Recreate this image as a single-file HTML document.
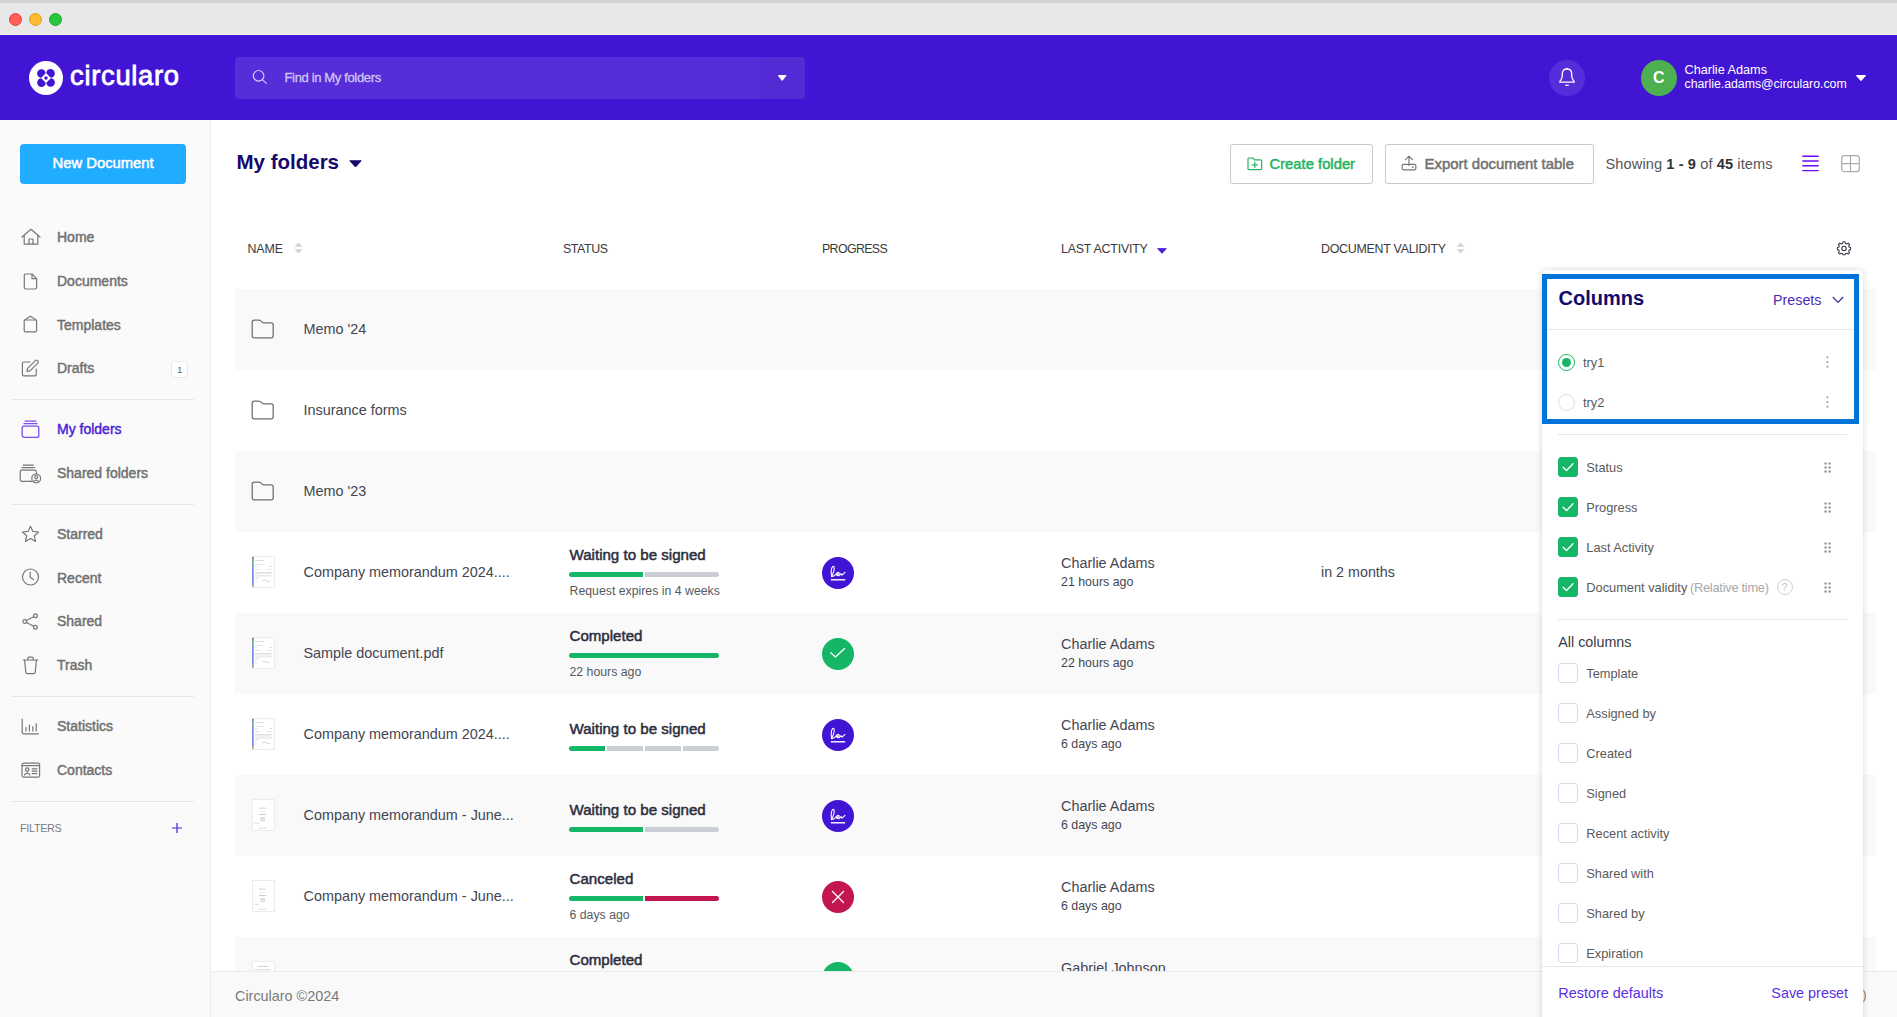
<!DOCTYPE html>
<html><head><meta charset="utf-8"><title>Circularo - My folders</title>
<style>
*{box-sizing:border-box;margin:0;padding:0}
html,body{width:1897px;height:1017px;overflow:hidden;background:#fff;font-family:"Liberation Sans",sans-serif;}
.abs{position:absolute}
.t{position:absolute;white-space:nowrap;line-height:1}
svg{overflow:visible}
</style></head><body>
<div class="abs" style="left:0px;top:0px;width:1897px;height:35px;background:#e8e8e8;"></div>
<div class="abs" style="left:0px;top:0px;width:1897px;height:3px;background:#d2d2d2;"></div>
<div class="abs" style="left:0px;top:34px;width:1897px;height:1px;background:#f4f3ec;"></div>
<div class="abs" style="left:9px;top:13px;width:13px;height:13px;border-radius:50%;background:#fe5f57;border:0.5px solid #e0443e"></div>
<div class="abs" style="left:29px;top:13px;width:13px;height:13px;border-radius:50%;background:#febc2e;border:0.5px solid #dfa123"></div>
<div class="abs" style="left:49px;top:13px;width:13px;height:13px;border-radius:50%;background:#28c840;border:0.5px solid #1aab29"></div>
<div class="abs" style="left:0px;top:35px;width:1897px;height:85px;background:#4214d4;"></div>
<svg class="abs" style="left:28.5px;top:61px;" width="34" height="34" viewBox="0 0 34 34"><circle cx="17" cy="17" r="17" fill="#fff"/>
<g fill="#4214d4"><path d="M16.7 16.7 V12.5 A4.3 4.3 0 0 0 12.4 8.2 A4.3 4.3 0 0 0 8.1 12.5 A4.3 4.3 0 0 0 12.4 16.8 Z"/><g transform="rotate(90 17 17)"><path d="M16.7 16.7 V12.5 A4.3 4.3 0 0 0 12.4 8.2 A4.3 4.3 0 0 0 8.1 12.5 A4.3 4.3 0 0 0 12.4 16.8 Z"/></g><g transform="rotate(180 17 17)"><path d="M16.7 16.7 V12.5 A4.3 4.3 0 0 0 12.4 8.2 A4.3 4.3 0 0 0 8.1 12.5 A4.3 4.3 0 0 0 12.4 16.8 Z"/></g><g transform="rotate(270 17 17)"><path d="M16.7 16.7 V12.5 A4.3 4.3 0 0 0 12.4 8.2 A4.3 4.3 0 0 0 8.1 12.5 A4.3 4.3 0 0 0 12.4 16.8 Z"/></g></g>
<rect x="13.5" y="13.5" width="7" height="7" fill="#fff" transform="rotate(45 17 17)"/>
<circle cx="17" cy="17" r="1.7" fill="#4214d4"/></svg>
<div class="t " style="left:70px;top:62.01px;font-size:27.4px;color:#fff;letter-spacing:0.7px;-webkit-text-stroke:0.8px #fff;">circularo</div>
<div class="abs" style="left:235px;top:57px;width:570px;height:42px;background:#572dd9;border-radius:4px;"></div>
<div class="abs" style="left:759px;top:57px;width:46px;height:42px;background:#532ad3;border-radius:0 4px 4px 0;"></div>
<svg class="abs" style="left:252px;top:69px;" width="16" height="16" viewBox="0 0 16 16"><circle cx="6.6" cy="6.8" r="5.3" fill="none" stroke="#d4cbf5" stroke-width="1.2"/><line x1="10.4" y1="10.6" x2="14.6" y2="14.6" stroke="#d4cbf5" stroke-width="1.2"/></svg>
<div class="t " style="left:284.5px;top:71.00px;font-size:13px;color:#cfc6f4;letter-spacing:-0.35px;-webkit-text-stroke:0.3px #cfc6f4;">Find in My folders</div>
<svg class="abs" style="left:778px;top:75px;" width="9" height="6" viewBox="0 0 9 6"><path d="M0.6 0.6 L7.8 0.6 L4.2 5.2 Z" fill="#fff" stroke="#fff" stroke-width="1.1" stroke-linejoin="round"/></svg>
<div class="abs" style="left:1549px;top:59.5px;width:36px;height:36px;border-radius:50%;background:#552ed9"></div>
<svg class="abs" style="left:1557.5px;top:67px;" width="18" height="20" viewBox="0 0 18 20"><path d="M1.8 15.2 Q1.8 14 3 12.8 Q4.2 11.6 4.3 8.6 L4.3 6.8 Q4.3 2 9 2 Q13.7 2 13.7 6.8 L13.7 8.6 Q13.8 11.6 15 12.8 Q16.2 14 16.2 15.2 Z" fill="none" stroke="#fff" stroke-width="1.3" stroke-linejoin="round"/><path d="M7.4 17.8 Q9 19.2 10.6 17.8" fill="none" stroke="#fff" stroke-width="1.2"/><circle cx="9" cy="1.5" r="0.8" fill="#fff"/></svg>
<div class="abs" style="left:1641px;top:60px;width:36px;height:36px;border-radius:50%;background:#4caf50"></div>
<div class="t " style="left:1653px;top:70.46px;font-size:16px;color:#fff;font-weight:700;">C</div>
<div class="t " style="left:1684.5px;top:64.25px;font-size:12.7px;color:#fff;">Charlie Adams</div>
<div class="t " style="left:1684.5px;top:78.09px;font-size:12.3px;color:#fff;">charlie.adams@circularo.com</div>
<svg class="abs" style="left:1856px;top:75px;" width="10" height="6" viewBox="0 0 10 6"><path d="M0.7 0.7 L9.3 0.7 L5 5.3 Z" fill="#fff" stroke="#fff" stroke-width="1.2" stroke-linejoin="round"/></svg>
<div class="abs" style="left:0px;top:120px;width:211px;height:897px;background:#fafafa;border-right:1px solid #ececec;"></div>
<div class="abs" style="left:20px;top:144px;width:166px;height:40px;background:#20acff;border-radius:4px;"></div>
<div class="t " style="left:52.5px;top:156.47px;font-size:14.8px;color:#fff;-webkit-text-stroke:0.5px #fff;">New Document</div>
<div class="t " style="left:57px;top:230.15px;font-size:14px;color:#707070;-webkit-text-stroke:0.45px #707070;">Home</div>
<svg class="abs" style="left:21px;top:228px;" width="20" height="18" viewBox="0 0 20 18"><path d="M1 9 L10 1.2 L19 9" fill="none" stroke="#777" stroke-width="1.2" stroke-linejoin="round" stroke-linecap="round"/><path d="M3.2 7.6 V16.2 H16.8 V7.6" fill="none" stroke="#777" stroke-width="1.2" stroke-linejoin="round" stroke-linecap="round"/><path d="M8 16.2 V11 H12 V16.2" fill="none" stroke="#777" stroke-width="1.2" stroke-linejoin="round" stroke-linecap="round"/></svg>
<div class="t " style="left:57px;top:274.15px;font-size:14px;color:#707070;-webkit-text-stroke:0.45px #707070;">Documents</div>
<svg class="abs" style="left:23px;top:273px;" width="15" height="17" viewBox="0 0 15 17"><path d="M1.3 2.2 Q1.3 1 2.5 1 H9 L13.6 5.6 V14.8 Q13.6 16 12.4 16 H2.5 Q1.3 16 1.3 14.8 Z" fill="none" stroke="#777" stroke-width="1.2" stroke-linejoin="round" stroke-linecap="round"/><path d="M9 1 V5.6 H13.6" fill="none" stroke="#777" stroke-width="1.2" stroke-linejoin="round" stroke-linecap="round"/></svg>
<div class="t " style="left:57px;top:318.15px;font-size:14px;color:#707070;-webkit-text-stroke:0.45px #707070;">Templates</div>
<svg class="abs" style="left:23px;top:315px;" width="15" height="18" viewBox="0 0 15 18"><path d="M1.2 6 Q1.2 5 2.2 4.4 L7.4 1.3 L12.6 4.4 Q13.6 5 13.6 6 V15.4 Q13.6 16.8 12.2 16.8 H2.6 Q1.2 16.8 1.2 15.4 Z" fill="none" stroke="#777" stroke-width="1.2" stroke-linejoin="round" stroke-linecap="round"/><path d="M2 5 H12.8" fill="none" stroke="#777" stroke-width="1.2" stroke-linejoin="round" stroke-linecap="round"/></svg>
<div class="t " style="left:57px;top:361.15px;font-size:14px;color:#707070;-webkit-text-stroke:0.45px #707070;">Drafts</div>
<svg class="abs" style="left:21px;top:359px;" width="19" height="18" viewBox="0 0 19 18"><path d="M9 3 H2.8 Q1.4 3 1.4 4.4 V15.4 Q1.4 16.8 2.8 16.8 H13.8 Q15.2 16.8 15.2 15.4 V10" fill="none" stroke="#777" stroke-width="1.2" stroke-linejoin="round" stroke-linecap="round"/><path d="M6 12.3 L6.6 9.4 L14.6 1.4 Q15.4 0.7 16.3 1.4 L17 2.1 Q17.7 3 17 3.8 L9 11.8 Z" fill="none" stroke="#777" stroke-width="1.2" stroke-linejoin="round" stroke-linecap="round"/></svg>
<div class="abs" style="left:171px;top:361px;width:17px;height:17px;background:#fff;border:1px solid #e8e8e8;border-radius:3.5px;"></div>
<div class="t " style="left:177px;top:364.70px;font-size:9.8px;color:#666;">1</div>
<div class="abs" style="left:12px;top:399px;width:182px;height:1px;background:#e6e6e6;"></div>
<div class="t " style="left:57px;top:422.15px;font-size:14px;color:#4a1fd8;-webkit-text-stroke:0.45px #4a1fd8;">My folders</div>
<svg class="abs" style="left:21px;top:420px;" width="19" height="19" viewBox="0 0 19 19"><rect x="1.2" y="6.2" width="16.6" height="11.2" rx="2" fill="none" stroke="#7d4cf0" stroke-width="1.3" stroke-linejoin="round" stroke-linecap="round"/><path d="M3 3.6 H16" fill="none" stroke="#7d4cf0" stroke-width="1.3" stroke-linejoin="round" stroke-linecap="round"/><path d="M4.2 1.2 H14.8" fill="none" stroke="#7d4cf0" stroke-width="1.3" stroke-linejoin="round" stroke-linecap="round"/></svg>
<div class="t " style="left:57px;top:466.15px;font-size:14px;color:#707070;-webkit-text-stroke:0.45px #707070;">Shared folders</div>
<svg class="abs" style="left:19px;top:464px;" width="23" height="19" viewBox="0 0 23 19"><path d="M13 17.4 H3 Q1.2 17.4 1.2 15.6 V8 Q1.2 6.2 3 6.2 H15.6 Q17.4 6.2 17.4 8 V9.5" fill="none" stroke="#777" stroke-width="1.2" stroke-linejoin="round" stroke-linecap="round"/><path d="M3 3.6 H15.6" fill="none" stroke="#777" stroke-width="1.2" stroke-linejoin="round" stroke-linecap="round"/><path d="M4.2 1.2 H14.4" fill="none" stroke="#777" stroke-width="1.2" stroke-linejoin="round" stroke-linecap="round"/><circle cx="17.2" cy="14.4" r="4.4" fill="none" stroke="#777" stroke-width="1.2" stroke-linejoin="round" stroke-linecap="round"/><circle cx="17.2" cy="13.2" r="1.5" fill="none" stroke="#777" stroke-width="1.2" stroke-linejoin="round" stroke-linecap="round"/><path d="M14.6 17.6 Q17.2 14.8 19.8 17.6" fill="none" stroke="#777" stroke-width="1.2" stroke-linejoin="round" stroke-linecap="round"/></svg>
<div class="abs" style="left:12px;top:504px;width:182px;height:1px;background:#e6e6e6;"></div>
<div class="t " style="left:57px;top:527.15px;font-size:14px;color:#707070;-webkit-text-stroke:0.45px #707070;">Starred</div>
<svg class="abs" style="left:21px;top:525px;" width="19" height="18" viewBox="0 0 19 18"><path d="M9.5 1.2 L11.9 6.4 L17.6 7 L13.3 10.8 L14.5 16.4 L9.5 13.6 L4.5 16.4 L5.7 10.8 L1.4 7 L7.1 6.4 Z" fill="none" stroke="#777" stroke-width="1.2" stroke-linejoin="round" stroke-linecap="round"/></svg>
<div class="t " style="left:57px;top:571.15px;font-size:14px;color:#707070;-webkit-text-stroke:0.45px #707070;">Recent</div>
<svg class="abs" style="left:21px;top:568px;" width="19" height="18" viewBox="0 0 19 18"><circle cx="9.5" cy="9" r="8" fill="none" stroke="#777" stroke-width="1.2" stroke-linejoin="round" stroke-linecap="round"/><path d="M9.2 4.2 V9.4 L12.4 11.4" fill="none" stroke="#777" stroke-width="1.2" stroke-linejoin="round" stroke-linecap="round"/></svg>
<div class="t " style="left:57px;top:614.15px;font-size:14px;color:#707070;-webkit-text-stroke:0.45px #707070;">Shared</div>
<svg class="abs" style="left:22px;top:613px;" width="17" height="17" viewBox="0 0 17 17"><circle cx="2.8" cy="8.5" r="1.9" fill="none" stroke="#777" stroke-width="1.2" stroke-linejoin="round" stroke-linecap="round"/><circle cx="13.4" cy="2.8" r="1.9" fill="none" stroke="#777" stroke-width="1.2" stroke-linejoin="round" stroke-linecap="round"/><circle cx="13.4" cy="14.2" r="1.9" fill="none" stroke="#777" stroke-width="1.2" stroke-linejoin="round" stroke-linecap="round"/><path d="M4.5 7.5 L11.7 3.8 M4.5 9.5 L11.7 13.2" fill="none" stroke="#777" stroke-width="1.2" stroke-linejoin="round" stroke-linecap="round"/></svg>
<div class="t " style="left:57px;top:658.15px;font-size:14px;color:#707070;-webkit-text-stroke:0.45px #707070;">Trash</div>
<svg class="abs" style="left:22px;top:656px;" width="17" height="19" viewBox="0 0 17 19"><path d="M1.2 4 H15.8" fill="none" stroke="#777" stroke-width="1.2" stroke-linejoin="round" stroke-linecap="round"/><path d="M5.8 3.8 V2.4 Q5.8 1.2 7 1.2 H10 Q11.2 1.2 11.2 2.4 V3.8" fill="none" stroke="#777" stroke-width="1.2" stroke-linejoin="round" stroke-linecap="round"/><path d="M2.6 4 L3.8 16.4 Q3.9 17.6 5.1 17.6 H11.9 Q13.1 17.6 13.2 16.4 L14.4 4" fill="none" stroke="#777" stroke-width="1.2" stroke-linejoin="round" stroke-linecap="round"/></svg>
<div class="abs" style="left:12px;top:696px;width:182px;height:1px;background:#e6e6e6;"></div>
<div class="t " style="left:57px;top:719.15px;font-size:14px;color:#707070;-webkit-text-stroke:0.45px #707070;">Statistics</div>
<svg class="abs" style="left:21px;top:718px;" width="19" height="17" viewBox="0 0 19 17"><path d="M1.2 1 V14.6 Q1.2 15.8 2.4 15.8 H17.4" fill="none" stroke="#777" stroke-width="1.2" stroke-linejoin="round" stroke-linecap="round"/><path d="M5 13 V9.6 M8.4 13 V7.2 M11.8 13 V8.6 M15.2 13 V5.6" fill="none" stroke="#777" stroke-width="1.2" stroke-linejoin="round" stroke-linecap="round"/></svg>
<div class="t " style="left:57px;top:763.15px;font-size:14px;color:#707070;-webkit-text-stroke:0.45px #707070;">Contacts</div>
<svg class="abs" style="left:21px;top:762px;" width="19" height="16" viewBox="0 0 19 16"><rect x="1" y="1.2" width="17.6" height="14" rx="1.8" fill="none" stroke="#777" stroke-width="1.2" stroke-linejoin="round" stroke-linecap="round"/><path d="M1 3.6 H18.6" fill="none" stroke="#777" stroke-width="1.2" stroke-linejoin="round" stroke-linecap="round"/><circle cx="6.2" cy="7.6" r="1.7" fill="none" stroke="#777" stroke-width="1.2" stroke-linejoin="round" stroke-linecap="round"/><path d="M3.4 13 Q6.2 9.2 9 13" fill="none" stroke="#777" stroke-width="1.2" stroke-linejoin="round" stroke-linecap="round"/><path d="M11.2 6.8 H16 M11.2 9.2 H16 M11.2 11.6 H16" fill="none" stroke="#777" stroke-width="1.2" stroke-linejoin="round" stroke-linecap="round"/></svg>
<div class="abs" style="left:12px;top:801px;width:182px;height:1px;background:#e6e6e6;"></div>
<div class="t " style="left:20px;top:822.86px;font-size:10.8px;color:#7b7b7b;letter-spacing:-0.3px;">FILTERS</div>
<svg class="abs" style="left:171.5px;top:822.5px;" width="10" height="10" viewBox="0 0 10 10"><path d="M5 0 V10 M0 5 H10" stroke="#4a1fd8" stroke-width="1.2"/></svg>
<div class="t " style="left:236.5px;top:151.65px;font-size:20.5px;color:#16096b;font-weight:700;">My folders</div>
<svg class="abs" style="left:349px;top:159.5px;" width="13" height="8" viewBox="0 0 13 8"><path d="M0.8 0.8 H12.2 L6.5 7 Z" fill="#16096b" stroke="#16096b" stroke-width="1" stroke-linejoin="round"/></svg>
<div class="abs" style="left:1230px;top:144px;width:143px;height:40px;background:#fff;border:1px solid #c9c9c9;border-radius:3px;"></div>
<svg class="abs" style="left:1246.5px;top:156.5px;" width="16" height="14" viewBox="0 0 16 14"><path d="M1 2 Q1 1 2 1 H6 L7.6 2.8 H13.6 Q14.6 2.8 14.6 3.8 V11.6 Q14.6 12.6 13.6 12.6 H2 Q1 12.6 1 11.6 Z" fill="none" stroke="#28b462" stroke-width="1.2" stroke-linejoin="round" stroke-linecap="round"/><path d="M7.8 5.2 V10.4 M5.2 7.8 H10.4" fill="none" stroke="#28b462" stroke-width="1.2" stroke-linejoin="round" stroke-linecap="round"/></svg>
<div class="t " style="left:1269.5px;top:156.77px;font-size:14.8px;color:#25b35f;-webkit-text-stroke:0.5px #25b35f;">Create folder</div>
<div class="abs" style="left:1385px;top:144px;width:209px;height:40px;background:#fff;border:1px solid #c9c9c9;border-radius:3px;"></div>
<svg class="abs" style="left:1401px;top:155px;" width="16" height="16" viewBox="0 0 16 16"><path d="M8 1.2 V10.6 M4.6 4.6 L8 1.2 L11.4 4.6" fill="none" stroke="#777" stroke-width="1.2" stroke-linejoin="round" stroke-linecap="round"/><rect x="1.2" y="9.4" width="13.6" height="5.4" rx="1.2" fill="none" stroke="#777" stroke-width="1.2" stroke-linejoin="round" stroke-linecap="round"/><path d="M11.2 12.1 H12.4" fill="none" stroke="#777" stroke-width="1.2" stroke-linejoin="round" stroke-linecap="round"/></svg>
<div class="t " style="left:1424.5px;top:156.64px;font-size:14.95px;color:#727272;-webkit-text-stroke:0.5px #727272;">Export document table</div>
<div class="t" style="left:1605.5px;top:156.64px;font-size:14.6px;color:#555;letter-spacing:0.1px">Showing <b style="color:#333">1 - 9</b> of <b style="color:#333">45</b> items</div>
<svg class="abs" style="left:1802px;top:155px;" width="17" height="17" viewBox="0 0 17 17"><path d="M0.8 1.2 H16.2 M0.8 6 H16.2 M0.8 10.8 H16.2 M0.8 15.6 H16.2" stroke="#6a0af8" stroke-width="1.4" stroke-linecap="round"/></svg>
<svg class="abs" style="left:1841px;top:155px;" width="19" height="18" viewBox="0 0 19 18"><rect x="0.7" y="0.7" width="17.6" height="16" rx="2.6" fill="none" stroke="#ababab" stroke-width="1.2"/><path d="M9.5 0.7 V16.7 M0.7 8.7 H18.3" stroke="#ababab" stroke-width="1.2"/></svg>
<div class="t " style="left:247.5px;top:242.90px;font-size:12.4px;color:#3a3a3a;letter-spacing:-0.1px;">NAME</div>
<svg class="abs" style="left:294px;top:242px;" width="9" height="12" viewBox="0 0 9 12"><path d="M4.5 0.5 L8.5 4.8 H0.5 Z M4.5 11.5 L8.5 7.2 H0.5 Z" fill="#d2d2d2"/></svg>
<div class="t " style="left:563px;top:242.90px;font-size:12.4px;color:#3a3a3a;letter-spacing:-0.4px;">STATUS</div>
<div class="t " style="left:822px;top:242.90px;font-size:12.4px;color:#3a3a3a;letter-spacing:-0.65px;">PROGRESS</div>
<div class="t " style="left:1061px;top:242.90px;font-size:12.4px;color:#3a3a3a;letter-spacing:-0.2px;">LAST ACTIVITY</div>
<svg class="abs" style="left:1157px;top:248px;" width="10" height="6" viewBox="0 0 10 6"><path d="M0.6 0.6 H9.4 L5 5.4 Z" fill="#4a1fd8" stroke="#4a1fd8" stroke-width="0.8" stroke-linejoin="round"/></svg>
<div class="t " style="left:1321px;top:242.90px;font-size:12.4px;color:#3a3a3a;letter-spacing:-0.25px;">DOCUMENT VALIDITY</div>
<svg class="abs" style="left:1456px;top:242px;" width="9" height="12" viewBox="0 0 9 12"><path d="M4.5 0.5 L8.5 4.8 H0.5 Z M4.5 11.5 L8.5 7.2 H0.5 Z" fill="#d2d2d2"/></svg>
<svg class="abs" style="left:1837px;top:241px;" width="14" height="14" viewBox="0 0 14 14"><path d="M6 0.8 H8 L8.4 2.4 L9.8 3 L11.2 2.1 L12.6 3.5 L11.7 4.9 L12.3 6.3 L13.6 6.6 V8.6 L12.3 8.9 L11.7 10.3 L12.6 11.7 L11.2 13.1 L9.8 12.2 L8.4 12.8 L8 13.8 H6 L5.6 12.8 L4.2 12.2 L2.8 13.1 L1.4 11.7 L2.3 10.3 L1.7 8.9 L0.4 8.6 V6.6 L1.7 6.3 L2.3 4.9 L1.4 3.5 L2.8 2.1 L4.2 3 L5.6 2.4 Z" fill="none" stroke="#3a3a4a" stroke-width="1.1" stroke-linejoin="round"/><circle cx="7" cy="7.5" r="2.2" fill="none" stroke="#3a3a4a" stroke-width="1.1"/></svg>
<div class="abs" style="left:235px;top:289px;width:1641px;height:81px;background:#f9f9f9;"></div>
<div class="abs" style="left:235px;top:370px;width:1641px;height:81px;background:#fff;"></div>
<div class="abs" style="left:235px;top:451px;width:1641px;height:81px;background:#f9f9f9;"></div>
<div class="abs" style="left:235px;top:532px;width:1641px;height:81px;background:#fff;"></div>
<div class="abs" style="left:235px;top:613px;width:1641px;height:81px;background:#f9f9f9;"></div>
<div class="abs" style="left:235px;top:694px;width:1641px;height:81px;background:#fff;"></div>
<div class="abs" style="left:235px;top:775px;width:1641px;height:81px;background:#f9f9f9;"></div>
<div class="abs" style="left:235px;top:856px;width:1641px;height:81px;background:#fff;"></div>
<div class="abs" style="left:235px;top:937px;width:1641px;height:81px;background:#f9f9f9;"></div>
<svg class="abs" style="left:251px;top:319px;" width="24" height="20" viewBox="0 0 24 20"><path d="M1.2 3.4 Q1.2 1.2 3.4 1.2 H7.6 Q9.4 1.2 10.6 2.6 Q11.8 3.9 13.2 3.9 H20.2 Q22.2 3.9 22.2 5.9 V16.8 Q22.2 18.8 20.2 18.8 H3.2 Q1.2 18.8 1.2 16.8 Z" fill="none" stroke="#707070" stroke-width="1.3" stroke-linejoin="round"/></svg>
<div class="t " style="left:303.5px;top:322.31px;font-size:14.4px;color:#434652;transform:scaleY(1.08);transform-origin:0 12.19px;">Memo '24</div>
<svg class="abs" style="left:251px;top:400px;" width="24" height="20" viewBox="0 0 24 20"><path d="M1.2 3.4 Q1.2 1.2 3.4 1.2 H7.6 Q9.4 1.2 10.6 2.6 Q11.8 3.9 13.2 3.9 H20.2 Q22.2 3.9 22.2 5.9 V16.8 Q22.2 18.8 20.2 18.8 H3.2 Q1.2 18.8 1.2 16.8 Z" fill="none" stroke="#707070" stroke-width="1.3" stroke-linejoin="round"/></svg>
<div class="t " style="left:303.5px;top:403.31px;font-size:14.4px;color:#434652;transform:scaleY(1.08);transform-origin:0 12.19px;">Insurance forms</div>
<svg class="abs" style="left:251px;top:481px;" width="24" height="20" viewBox="0 0 24 20"><path d="M1.2 3.4 Q1.2 1.2 3.4 1.2 H7.6 Q9.4 1.2 10.6 2.6 Q11.8 3.9 13.2 3.9 H20.2 Q22.2 3.9 22.2 5.9 V16.8 Q22.2 18.8 20.2 18.8 H3.2 Q1.2 18.8 1.2 16.8 Z" fill="none" stroke="#707070" stroke-width="1.3" stroke-linejoin="round"/></svg>
<div class="t " style="left:303.5px;top:484.31px;font-size:14.4px;color:#434652;transform:scaleY(1.08);transform-origin:0 12.19px;">Memo '23</div>
<svg class="abs" style="left:252px;top:556px;" width="23" height="32" viewBox="0 0 23 32"><rect x="0.5" y="0.5" width="22" height="31" fill="#fff" stroke="#ececec"/><defs><linearGradient id="lg1" x1="0" y1="0" x2="0" y2="1"><stop offset="0" stop-color="#2b3a4a"/><stop offset="0.15" stop-color="#2a8a7a"/><stop offset="0.4" stop-color="#3050f0"/><stop offset="0.85" stop-color="#3a4ae0"/><stop offset="1" stop-color="#c08a30"/></linearGradient></defs><rect x="0.4" y="0.8" width="1.1" height="30.4" fill="url(#lg1)"/><rect x="3" y="4" width="9" height="0.8" fill="#d4d4d4"/><rect x="3" y="8" width="8" height="0.8" fill="#e4e4e4"/><rect x="3" y="10" width="2" height="0.8" fill="#d8d8d8"/><rect x="17" y="10" width="3" height="0.8" fill="#d8d8d8"/><rect x="3" y="13" width="5" height="0.8" fill="#e0e0e0"/><rect x="15" y="13" width="5" height="0.8" fill="#e0e0e0"/><rect x="3" y="16" width="17" height="0.8" fill="#d8d8d8"/><rect x="3" y="17.5" width="16" height="0.8" fill="#dcdcdc"/><rect x="3" y="19.5" width="17" height="0.8" fill="#d8d8d8"/><rect x="3" y="21.5" width="4" height="0.8" fill="#d4d4d4"/><rect x="10" y="24" width="5" height="0.8" fill="#d0d0d0"/><rect x="15" y="25" width="3" height="0.8" fill="#d0d0d0"/><rect x="3" y="25.5" width="2" height="0.8" fill="#e0e0e0"/></svg>
<div class="t " style="left:303.5px;top:564.81px;font-size:14.4px;color:#434652;transform:scaleY(1.08);transform-origin:0 12.19px;">Company memorandum 2024....</div>
<div class="t " style="left:569.5px;top:547.22px;font-size:15.1px;color:#2d2d3c;-webkit-text-stroke:0.5px #2d2d3c;">Waiting to be signed</div>
<div class="abs" style="left:569px;top:572px;width:74px;height:5px;background:#15b766;border-radius:2.5px 0 0 2.5px;"></div>
<div class="abs" style="left:645px;top:572px;width:74px;height:5px;background:#cbced3;border-radius:0 2.5px 2.5px 0;"></div>
<div class="t " style="left:569.5px;top:585.39px;font-size:12.3px;color:#555a62;transform:scaleY(1.08);transform-origin:0 10.41px;">Request expires in 4 weeks</div>
<div class="abs" style="left:822px;top:557px;width:32px;height:32px;border-radius:50%;background:#4214d4"></div>
<svg class="abs" style="left:829px;top:563px;" width="18" height="20" viewBox="0 0 18 20"><path d="M2.6 13.4 Q1.6 9.4 2.6 5.6 Q3.6 2.6 4.8 3.4 Q5.8 4.6 4.8 8.2 Q3.8 11.6 2.4 13.6 Q4.8 13.4 6.8 11.4 Q8 9.4 9.6 9.4 Q10.8 9.8 9.8 11 Q8.8 11.8 7.2 11.4 Q7.8 13.2 10.2 12.6 L12 10.6 L13 12.2 L16 9.4" fill="none" stroke="#fff" stroke-width="1.1" stroke-linecap="round" stroke-linejoin="round"/><path d="M1.8 16.8 H16.2" stroke="#fff" stroke-width="1.4"/></svg>
<div class="t " style="left:1061px;top:555.81px;font-size:14.4px;color:#434652;transform:scaleY(1.06);transform-origin:0 12.19px;">Charlie Adams</div>
<div class="t " style="left:1061px;top:576.00px;font-size:12.4px;color:#434652;transform:scaleY(1.08);transform-origin:0 10.50px;">21 hours ago</div>
<div class="t " style="left:1321px;top:564.60px;font-size:14.3px;color:#434652;transform:scaleY(1.06);transform-origin:0 12.10px;">in 2 months</div>
<svg class="abs" style="left:252px;top:637px;" width="23" height="32" viewBox="0 0 23 32"><rect x="0.5" y="0.5" width="22" height="31" fill="#fff" stroke="#ececec"/><defs><linearGradient id="lg2" x1="0" y1="0" x2="0" y2="1"><stop offset="0" stop-color="#2b3a4a"/><stop offset="0.15" stop-color="#2a8a7a"/><stop offset="0.4" stop-color="#3050f0"/><stop offset="0.85" stop-color="#3a4ae0"/><stop offset="1" stop-color="#c08a30"/></linearGradient></defs><rect x="0.4" y="0.8" width="1.1" height="30.4" fill="url(#lg2)"/><rect x="3" y="4" width="9" height="0.8" fill="#d4d4d4"/><rect x="3" y="8" width="8" height="0.8" fill="#e4e4e4"/><rect x="3" y="10" width="2" height="0.8" fill="#d8d8d8"/><rect x="17" y="10" width="3" height="0.8" fill="#d8d8d8"/><rect x="3" y="13" width="5" height="0.8" fill="#e0e0e0"/><rect x="15" y="13" width="5" height="0.8" fill="#e0e0e0"/><rect x="3" y="16" width="17" height="0.8" fill="#d8d8d8"/><rect x="3" y="17.5" width="16" height="0.8" fill="#dcdcdc"/><rect x="3" y="19.5" width="17" height="0.8" fill="#d8d8d8"/><rect x="3" y="21.5" width="4" height="0.8" fill="#d4d4d4"/><rect x="10" y="24" width="5" height="0.8" fill="#d0d0d0"/><rect x="15" y="25" width="3" height="0.8" fill="#d0d0d0"/><rect x="3" y="25.5" width="2" height="0.8" fill="#e0e0e0"/></svg>
<div class="t " style="left:303.5px;top:645.81px;font-size:14.4px;color:#434652;transform:scaleY(1.08);transform-origin:0 12.19px;">Sample document.pdf</div>
<div class="t " style="left:569.5px;top:628.22px;font-size:15.1px;color:#2d2d3c;-webkit-text-stroke:0.5px #2d2d3c;">Completed</div>
<div class="abs" style="left:569px;top:653px;width:150px;height:5px;background:#15b766;border-radius:2.5px;"></div>
<div class="t " style="left:569.5px;top:666.39px;font-size:12.3px;color:#555a62;transform:scaleY(1.08);transform-origin:0 10.41px;">22 hours ago</div>
<div class="abs" style="left:822px;top:638px;width:32px;height:32px;border-radius:50%;background:#15b766"></div>
<svg class="abs" style="left:829px;top:646px;" width="18" height="14" viewBox="0 0 18 14"><path d="M1.8 6.8 L6.4 11 L15.6 2.6" fill="none" stroke="#fff" stroke-width="1.3" stroke-linecap="round" stroke-linejoin="round"/></svg>
<div class="t " style="left:1061px;top:636.81px;font-size:14.4px;color:#434652;transform:scaleY(1.06);transform-origin:0 12.19px;">Charlie Adams</div>
<div class="t " style="left:1061px;top:657.00px;font-size:12.4px;color:#434652;transform:scaleY(1.08);transform-origin:0 10.50px;">22 hours ago</div>
<svg class="abs" style="left:252px;top:718px;" width="23" height="32" viewBox="0 0 23 32"><rect x="0.5" y="0.5" width="22" height="31" fill="#fff" stroke="#ececec"/><defs><linearGradient id="lg3" x1="0" y1="0" x2="0" y2="1"><stop offset="0" stop-color="#2b3a4a"/><stop offset="0.15" stop-color="#2a8a7a"/><stop offset="0.4" stop-color="#3050f0"/><stop offset="0.85" stop-color="#3a4ae0"/><stop offset="1" stop-color="#c08a30"/></linearGradient></defs><rect x="0.4" y="0.8" width="1.1" height="30.4" fill="url(#lg3)"/><rect x="3" y="4" width="9" height="0.8" fill="#d4d4d4"/><rect x="3" y="8" width="8" height="0.8" fill="#e4e4e4"/><rect x="3" y="10" width="2" height="0.8" fill="#d8d8d8"/><rect x="17" y="10" width="3" height="0.8" fill="#d8d8d8"/><rect x="3" y="13" width="5" height="0.8" fill="#e0e0e0"/><rect x="15" y="13" width="5" height="0.8" fill="#e0e0e0"/><rect x="3" y="16" width="17" height="0.8" fill="#d8d8d8"/><rect x="3" y="17.5" width="16" height="0.8" fill="#dcdcdc"/><rect x="3" y="19.5" width="17" height="0.8" fill="#d8d8d8"/><rect x="3" y="21.5" width="4" height="0.8" fill="#d4d4d4"/><rect x="10" y="24" width="5" height="0.8" fill="#d0d0d0"/><rect x="15" y="25" width="3" height="0.8" fill="#d0d0d0"/><rect x="3" y="25.5" width="2" height="0.8" fill="#e0e0e0"/></svg>
<div class="t " style="left:303.5px;top:726.81px;font-size:14.4px;color:#434652;transform:scaleY(1.08);transform-origin:0 12.19px;">Company memorandum 2024....</div>
<div class="t " style="left:569.5px;top:720.72px;font-size:15.1px;color:#2d2d3c;-webkit-text-stroke:0.5px #2d2d3c;">Waiting to be signed</div>
<div class="abs" style="left:569px;top:745.5px;width:36px;height:5px;background:#15b766;border-radius:2.5px 0 0 2.5px;"></div>
<div class="abs" style="left:607px;top:745.5px;width:36px;height:5px;background:#cbced3;border-radius:0;"></div>
<div class="abs" style="left:645px;top:745.5px;width:36px;height:5px;background:#cbced3;border-radius:0;"></div>
<div class="abs" style="left:683px;top:745.5px;width:36px;height:5px;background:#cbced3;border-radius:0 2.5px 2.5px 0;"></div>
<div class="abs" style="left:822px;top:719px;width:32px;height:32px;border-radius:50%;background:#4214d4"></div>
<svg class="abs" style="left:829px;top:725px;" width="18" height="20" viewBox="0 0 18 20"><path d="M2.6 13.4 Q1.6 9.4 2.6 5.6 Q3.6 2.6 4.8 3.4 Q5.8 4.6 4.8 8.2 Q3.8 11.6 2.4 13.6 Q4.8 13.4 6.8 11.4 Q8 9.4 9.6 9.4 Q10.8 9.8 9.8 11 Q8.8 11.8 7.2 11.4 Q7.8 13.2 10.2 12.6 L12 10.6 L13 12.2 L16 9.4" fill="none" stroke="#fff" stroke-width="1.1" stroke-linecap="round" stroke-linejoin="round"/><path d="M1.8 16.8 H16.2" stroke="#fff" stroke-width="1.4"/></svg>
<div class="t " style="left:1061px;top:717.81px;font-size:14.4px;color:#434652;transform:scaleY(1.06);transform-origin:0 12.19px;">Charlie Adams</div>
<div class="t " style="left:1061px;top:738.00px;font-size:12.4px;color:#434652;transform:scaleY(1.08);transform-origin:0 10.50px;">6 days ago</div>
<svg class="abs" style="left:252px;top:799px;" width="23" height="32" viewBox="0 0 23 32"><rect x="0.5" y="0.5" width="22" height="31" fill="#fff" stroke="#ececec"/><rect x="7" y="8.6" width="6.8" height="1" fill="#d4d4d4"/><rect x="7.8" y="12.2" width="5.4" height="1" fill="#e6e6e6"/><rect x="7" y="15" width="6.8" height="1" fill="#cccccc"/><rect x="8.4" y="18.6" width="4.6" height="1" fill="#b4b4b4"/><rect x="8.4" y="20.8" width="4.6" height="1" fill="#c8c8c8"/><rect x="2.5" y="23.8" width="4.6" height="1" fill="#dcdcdc"/><rect x="6.5" y="28.8" width="8" height="1" fill="#e0e0e0"/></svg>
<div class="t " style="left:303.5px;top:807.81px;font-size:14.4px;color:#434652;transform:scaleY(1.08);transform-origin:0 12.19px;">Company memorandum - June...</div>
<div class="t " style="left:569.5px;top:801.72px;font-size:15.1px;color:#2d2d3c;-webkit-text-stroke:0.5px #2d2d3c;">Waiting to be signed</div>
<div class="abs" style="left:569px;top:826.5px;width:74px;height:5px;background:#15b766;border-radius:2.5px 0 0 2.5px;"></div>
<div class="abs" style="left:645px;top:826.5px;width:74px;height:5px;background:#cbced3;border-radius:0 2.5px 2.5px 0;"></div>
<div class="abs" style="left:822px;top:800px;width:32px;height:32px;border-radius:50%;background:#4214d4"></div>
<svg class="abs" style="left:829px;top:806px;" width="18" height="20" viewBox="0 0 18 20"><path d="M2.6 13.4 Q1.6 9.4 2.6 5.6 Q3.6 2.6 4.8 3.4 Q5.8 4.6 4.8 8.2 Q3.8 11.6 2.4 13.6 Q4.8 13.4 6.8 11.4 Q8 9.4 9.6 9.4 Q10.8 9.8 9.8 11 Q8.8 11.8 7.2 11.4 Q7.8 13.2 10.2 12.6 L12 10.6 L13 12.2 L16 9.4" fill="none" stroke="#fff" stroke-width="1.1" stroke-linecap="round" stroke-linejoin="round"/><path d="M1.8 16.8 H16.2" stroke="#fff" stroke-width="1.4"/></svg>
<div class="t " style="left:1061px;top:798.81px;font-size:14.4px;color:#434652;transform:scaleY(1.06);transform-origin:0 12.19px;">Charlie Adams</div>
<div class="t " style="left:1061px;top:819.00px;font-size:12.4px;color:#434652;transform:scaleY(1.08);transform-origin:0 10.50px;">6 days ago</div>
<svg class="abs" style="left:252px;top:880px;" width="23" height="32" viewBox="0 0 23 32"><rect x="0.5" y="0.5" width="22" height="31" fill="#fff" stroke="#ececec"/><rect x="7" y="8.6" width="6.8" height="1" fill="#d4d4d4"/><rect x="7.8" y="12.2" width="5.4" height="1" fill="#e6e6e6"/><rect x="7" y="15" width="6.8" height="1" fill="#cccccc"/><rect x="8.4" y="18.6" width="4.6" height="1" fill="#b4b4b4"/><rect x="8.4" y="20.8" width="4.6" height="1" fill="#c8c8c8"/><rect x="2.5" y="23.8" width="4.6" height="1" fill="#dcdcdc"/><rect x="6.5" y="28.8" width="8" height="1" fill="#e0e0e0"/></svg>
<div class="t " style="left:303.5px;top:888.81px;font-size:14.4px;color:#434652;transform:scaleY(1.08);transform-origin:0 12.19px;">Company memorandum - June...</div>
<div class="t " style="left:569.5px;top:871.22px;font-size:15.1px;color:#2d2d3c;-webkit-text-stroke:0.5px #2d2d3c;">Canceled</div>
<div class="abs" style="left:569px;top:896px;width:74px;height:5px;background:#15b766;border-radius:2.5px 0 0 2.5px;"></div>
<div class="abs" style="left:645px;top:896px;width:74px;height:5px;background:#c31550;border-radius:0 2.5px 2.5px 0;"></div>
<div class="t " style="left:569.5px;top:909.39px;font-size:12.3px;color:#555a62;transform:scaleY(1.08);transform-origin:0 10.41px;">6 days ago</div>
<div class="abs" style="left:822px;top:881px;width:32px;height:32px;border-radius:50%;background:#c31550"></div>
<svg class="abs" style="left:831px;top:890px;" width="14" height="14" viewBox="0 0 14 14"><path d="M1.5 1.5 L12.5 12.5 M12.5 1.5 L1.5 12.5" fill="none" stroke="#fff" stroke-width="1.3" stroke-linecap="round"/></svg>
<div class="t " style="left:1061px;top:879.81px;font-size:14.4px;color:#434652;transform:scaleY(1.06);transform-origin:0 12.19px;">Charlie Adams</div>
<div class="t " style="left:1061px;top:900.00px;font-size:12.4px;color:#434652;transform:scaleY(1.08);transform-origin:0 10.50px;">6 days ago</div>
<svg class="abs" style="left:252px;top:961px;" width="23" height="32" viewBox="0 0 23 32"><rect x="0.5" y="0.5" width="22" height="31" fill="#fff" stroke="#ececec"/><rect x="5.5" y="5" width="11" height="1" fill="#d0d0d0"/><rect x="2.5" y="8.3" width="16" height="1" fill="#d4d4d4"/></svg>
<div class="t " style="left:569.5px;top:952.22px;font-size:15.1px;color:#2d2d3c;-webkit-text-stroke:0.5px #2d2d3c;">Completed</div>
<div class="abs" style="left:569px;top:977px;width:150px;height:5px;background:#15b766;border-radius:2.5px;"></div>
<div class="t " style="left:569.5px;top:990.39px;font-size:12.3px;color:#555a62;transform:scaleY(1.08);transform-origin:0 10.41px;"> </div>
<div class="abs" style="left:822px;top:962px;width:32px;height:32px;border-radius:50%;background:#15b766"></div>
<svg class="abs" style="left:829px;top:970px;" width="18" height="14" viewBox="0 0 18 14"><path d="M1.8 6.8 L6.4 11 L15.6 2.6" fill="none" stroke="#fff" stroke-width="1.3" stroke-linecap="round" stroke-linejoin="round"/></svg>
<div class="t " style="left:1061px;top:960.81px;font-size:14.4px;color:#434652;transform:scaleY(1.06);transform-origin:0 12.19px;">Gabriel Johnson</div>
<div class="abs" style="left:211px;top:971px;width:1686px;height:46px;background:#f9f9f9;border-top:1px solid #ebebeb;"></div>
<div class="t " style="left:235px;top:988.81px;font-size:14.4px;color:#7a7a7a;">Circularo ©2024</div>
<div class="t " style="left:1862.5px;top:989.34px;font-size:12px;color:#777;">)</div>
<div class="abs" style="left:1541.5px;top:270px;width:321.5px;height:760px;background:#fff;border-radius:4px;box-shadow:0 0 6px rgba(0,0,0,0.16)"></div>
<div class="abs" style="left:1542px;top:274px;width:317px;height:150px;border:5px solid #0074d9"></div>
<div class="t " style="left:1558.5px;top:288.07px;font-size:20px;color:#140a6b;font-weight:700;">Columns</div>
<div class="t " style="left:1773px;top:292.90px;font-size:14.3px;color:#4a2bb8;">Presets</div>
<svg class="abs" style="left:1832px;top:296px;" width="12" height="8" viewBox="0 0 12 8"><path d="M0.8 1 L6 6.4 L11.2 1" fill="none" stroke="#3a2a8a" stroke-width="1.2"/></svg>
<div class="abs" style="left:1547px;top:329px;width:307px;height:1px;background:#e6e6e6;"></div>
<div class="abs" style="left:1557.8px;top:353.8px;width:17.4px;height:17.4px;border-radius:50%;border:1.2px solid #15b766"></div>
<div class="abs" style="left:1561.8px;top:357.8px;width:9.4px;height:9.4px;border-radius:50%;background:#15b766"></div>
<div class="t " style="left:1583px;top:357.08px;font-size:12.9px;color:#5a5a5a;">try1</div>
<div class="abs" style="left:1557.8px;top:393.8px;width:17.4px;height:17.4px;border-radius:50%;border:1px solid #dcd8f2"></div>
<div class="t " style="left:1583px;top:397.08px;font-size:12.9px;color:#5a5a5a;">try2</div>
<svg class="abs" style="left:1825.5px;top:356px;" width="3" height="12" viewBox="0 0 3 12"><circle cx="1.5" cy="1.3" r="1" fill="#999"/><circle cx="1.5" cy="6" r="1" fill="#999"/><circle cx="1.5" cy="10.7" r="1" fill="#999"/></svg>
<svg class="abs" style="left:1825.5px;top:396px;" width="3" height="12" viewBox="0 0 3 12"><circle cx="1.5" cy="1.3" r="1" fill="#999"/><circle cx="1.5" cy="6" r="1" fill="#999"/><circle cx="1.5" cy="10.7" r="1" fill="#999"/></svg>
<div class="abs" style="left:1558px;top:434px;width:289px;height:1px;background:#e6e6e6;"></div>
<div class="abs" style="left:1558px;top:457px;width:20px;height:20px;background:#15b766;border-radius:3.5px;"></div>
<svg class="abs" style="left:1561px;top:461px;" width="14" height="12" viewBox="0 0 14 12"><path d="M2 6.2 L5.6 9.6 L12 2.8" fill="none" stroke="#fff" stroke-width="1.4" stroke-linecap="round" stroke-linejoin="round"/></svg>
<div class="t " style="left:1586.3px;top:461.96px;font-size:12.8px;color:#5a5a5a;">Status</div>
<svg class="abs" style="left:1823.5px;top:461.5px;" width="7.2" height="11" viewBox="0 0 7.2 11"><circle cx="1.6" cy="1.6" r="1.25" fill="#9a9a9a"/><circle cx="1.6" cy="5.5" r="1.25" fill="#9a9a9a"/><circle cx="1.6" cy="9.4" r="1.25" fill="#9a9a9a"/><circle cx="5.6" cy="1.6" r="1.25" fill="#9a9a9a"/><circle cx="5.6" cy="5.5" r="1.25" fill="#9a9a9a"/><circle cx="5.6" cy="9.4" r="1.25" fill="#9a9a9a"/></svg>
<div class="abs" style="left:1558px;top:497px;width:20px;height:20px;background:#15b766;border-radius:3.5px;"></div>
<svg class="abs" style="left:1561px;top:501px;" width="14" height="12" viewBox="0 0 14 12"><path d="M2 6.2 L5.6 9.6 L12 2.8" fill="none" stroke="#fff" stroke-width="1.4" stroke-linecap="round" stroke-linejoin="round"/></svg>
<div class="t " style="left:1586.3px;top:501.96px;font-size:12.8px;color:#5a5a5a;">Progress</div>
<svg class="abs" style="left:1823.5px;top:501.5px;" width="7.2" height="11" viewBox="0 0 7.2 11"><circle cx="1.6" cy="1.6" r="1.25" fill="#9a9a9a"/><circle cx="1.6" cy="5.5" r="1.25" fill="#9a9a9a"/><circle cx="1.6" cy="9.4" r="1.25" fill="#9a9a9a"/><circle cx="5.6" cy="1.6" r="1.25" fill="#9a9a9a"/><circle cx="5.6" cy="5.5" r="1.25" fill="#9a9a9a"/><circle cx="5.6" cy="9.4" r="1.25" fill="#9a9a9a"/></svg>
<div class="abs" style="left:1558px;top:537px;width:20px;height:20px;background:#15b766;border-radius:3.5px;"></div>
<svg class="abs" style="left:1561px;top:541px;" width="14" height="12" viewBox="0 0 14 12"><path d="M2 6.2 L5.6 9.6 L12 2.8" fill="none" stroke="#fff" stroke-width="1.4" stroke-linecap="round" stroke-linejoin="round"/></svg>
<div class="t " style="left:1586.3px;top:541.96px;font-size:12.8px;color:#5a5a5a;">Last Activity</div>
<svg class="abs" style="left:1823.5px;top:541.5px;" width="7.2" height="11" viewBox="0 0 7.2 11"><circle cx="1.6" cy="1.6" r="1.25" fill="#9a9a9a"/><circle cx="1.6" cy="5.5" r="1.25" fill="#9a9a9a"/><circle cx="1.6" cy="9.4" r="1.25" fill="#9a9a9a"/><circle cx="5.6" cy="1.6" r="1.25" fill="#9a9a9a"/><circle cx="5.6" cy="5.5" r="1.25" fill="#9a9a9a"/><circle cx="5.6" cy="9.4" r="1.25" fill="#9a9a9a"/></svg>
<div class="abs" style="left:1558px;top:577px;width:20px;height:20px;background:#15b766;border-radius:3.5px;"></div>
<svg class="abs" style="left:1561px;top:581px;" width="14" height="12" viewBox="0 0 14 12"><path d="M2 6.2 L5.6 9.6 L12 2.8" fill="none" stroke="#fff" stroke-width="1.4" stroke-linecap="round" stroke-linejoin="round"/></svg>
<div class="t " style="left:1586.3px;top:581.96px;font-size:12.8px;color:#5a5a5a;">Document validity</div>
<svg class="abs" style="left:1823.5px;top:581.5px;" width="7.2" height="11" viewBox="0 0 7.2 11"><circle cx="1.6" cy="1.6" r="1.25" fill="#9a9a9a"/><circle cx="1.6" cy="5.5" r="1.25" fill="#9a9a9a"/><circle cx="1.6" cy="9.4" r="1.25" fill="#9a9a9a"/><circle cx="5.6" cy="1.6" r="1.25" fill="#9a9a9a"/><circle cx="5.6" cy="5.5" r="1.25" fill="#9a9a9a"/><circle cx="5.6" cy="9.4" r="1.25" fill="#9a9a9a"/></svg>
<div class="t " style="left:1690px;top:581.96px;font-size:12.8px;color:#a8a8a8;letter-spacing:-0.25px;">(Relative time)</div>
<div class="abs" style="left:1777px;top:579px;width:16px;height:16px;border-radius:50%;border:1px solid #d0d0d0"></div>
<div class="t " style="left:1781.5px;top:582.19px;font-size:11px;color:#c4c4c4;">?</div>
<div class="abs" style="left:1558px;top:619px;width:289px;height:1px;background:#e6e6e6;"></div>
<div class="t " style="left:1558.3px;top:634.60px;font-size:14.3px;color:#3a3a44;">All columns</div>
<div class="abs" style="left:1558px;top:663px;width:20px;height:20px;background:#fff;border:1px solid #dbd7f1;border-radius:3.5px;"></div>
<div class="t " style="left:1586.3px;top:667.96px;font-size:12.8px;color:#5a5a5a;">Template</div>
<div class="abs" style="left:1558px;top:703px;width:20px;height:20px;background:#fff;border:1px solid #dbd7f1;border-radius:3.5px;"></div>
<div class="t " style="left:1586.3px;top:707.96px;font-size:12.8px;color:#5a5a5a;">Assigned by</div>
<div class="abs" style="left:1558px;top:743px;width:20px;height:20px;background:#fff;border:1px solid #dbd7f1;border-radius:3.5px;"></div>
<div class="t " style="left:1586.3px;top:747.96px;font-size:12.8px;color:#5a5a5a;">Created</div>
<div class="abs" style="left:1558px;top:783px;width:20px;height:20px;background:#fff;border:1px solid #dbd7f1;border-radius:3.5px;"></div>
<div class="t " style="left:1586.3px;top:787.96px;font-size:12.8px;color:#5a5a5a;">Signed</div>
<div class="abs" style="left:1558px;top:823px;width:20px;height:20px;background:#fff;border:1px solid #dbd7f1;border-radius:3.5px;"></div>
<div class="t " style="left:1586.3px;top:827.96px;font-size:12.8px;color:#5a5a5a;">Recent activity</div>
<div class="abs" style="left:1558px;top:863px;width:20px;height:20px;background:#fff;border:1px solid #dbd7f1;border-radius:3.5px;"></div>
<div class="t " style="left:1586.3px;top:867.96px;font-size:12.8px;color:#5a5a5a;">Shared with</div>
<div class="abs" style="left:1558px;top:903px;width:20px;height:20px;background:#fff;border:1px solid #dbd7f1;border-radius:3.5px;"></div>
<div class="t " style="left:1586.3px;top:907.96px;font-size:12.8px;color:#5a5a5a;">Shared by</div>
<div class="abs" style="left:1558px;top:943px;width:20px;height:20px;background:#fff;border:1px solid #dbd7f1;border-radius:3.5px;"></div>
<div class="t " style="left:1586.3px;top:947.96px;font-size:12.8px;color:#5a5a5a;">Expiration</div>
<div class="abs" style="left:1541.5px;top:966px;width:321.5px;height:51px;background:#fff;border-top:1px solid #e6e6e6;"></div>
<div class="t " style="left:1558.3px;top:985.51px;font-size:14.4px;color:#5a2ee5;">Restore defaults</div>
<div class="t " style="left:1771.3px;top:985.51px;font-size:14.4px;color:#5a2ee5;">Save preset</div>
</body></html>
